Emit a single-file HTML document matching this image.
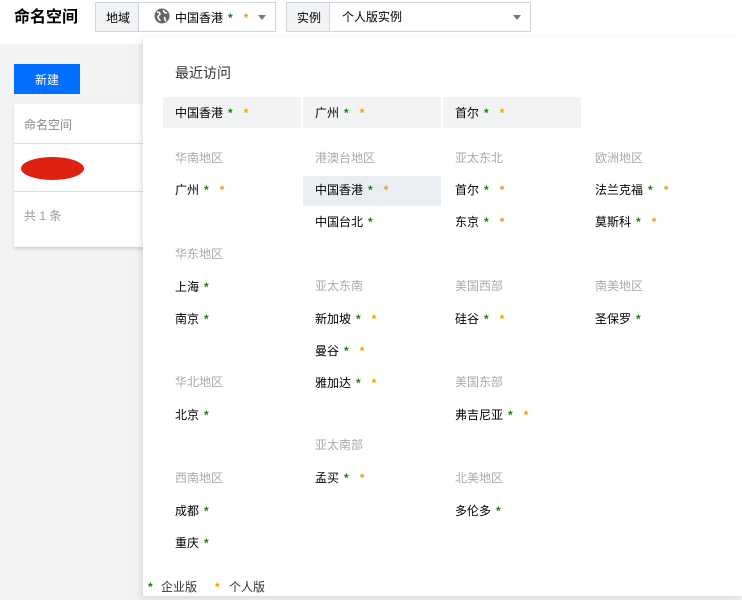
<!DOCTYPE html>
<html><head><meta charset="utf-8"><style>
*{margin:0;padding:0;box-sizing:border-box}
body{width:742px;height:600px;overflow:hidden;background:#f2f3f5;font-family:"Liberation Sans","Noto Sans CJK SC",sans-serif;font-size:12px;color:#000;position:relative}
.a{position:absolute;white-space:nowrap;line-height:16px;margin-top:1px}
.h{color:#aaa}
.g{color:#0a8a0a;font-weight:bold;margin-left:5px}
.o{color:#f5a000;font-weight:bold;margin-left:11px}
.bg{position:absolute;background:#f2f3f5}
</style></head><body>
<div style="position:absolute;left:0;top:0;width:742px;height:44px;background:#fff"></div>
<div class="a" style="left:14px;top:7px;font-size:16px;font-weight:bold;line-height:20px">命名空间</div>
<div style="position:absolute;left:95px;top:2px;width:181px;height:30px;border:1px solid #d0d4dc;background:#fff"></div>
<div style="position:absolute;left:96px;top:3px;width:43px;height:28px;background:#f2f3f5;border-right:1px solid #d0d4dc"></div>
<div class="a" style="left:106px;top:9px">地域</div>
<svg style="position:absolute;left:154px;top:8px" width="16" height="16" viewBox="0 0 16 16"><circle cx="8" cy="8" r="7.5" fill="#666"/><path d="M3 4c2 0 3 1 3 2s-2 1-2 3 2 2 2 4M10 2c-1 2 1 3 3 3M11 9c-1 1 0 3 1 4" stroke="#fff" stroke-width="1.6" fill="none"/></svg>
<div class="a" style="left:175px;top:9px">中国香港<span class="g">*</span><span class="o">*</span></div>
<div style="position:absolute;left:258px;top:15px;border:4px solid transparent;border-top:5px solid #777"></div>
<div style="position:absolute;left:286px;top:2px;width:245px;height:30px;border:1px solid #d0d4dc;background:#fff"></div>
<div style="position:absolute;left:287px;top:3px;width:43px;height:28px;background:#f2f3f5;border-right:1px solid #d0d4dc"></div>
<div class="a" style="left:297px;top:9px">实例</div>
<div class="a" style="left:342px;top:8px">个人版实例</div>
<div style="position:absolute;left:513px;top:15px;border:4px solid transparent;border-top:5px solid #777"></div>

<div style="position:absolute;left:14px;top:64px;width:66px;height:30px;background:#006eff"></div>
<div class="a" style="left:35px;top:71px;color:#fff">新建</div>
<div style="position:absolute;left:14px;top:104px;width:140px;height:143px;background:#fff;box-shadow:0 2px 3px rgba(0,0,0,.15)"></div>
<div class="a h" style="left:24px;top:116px;color:#888">命名空间</div>
<div style="position:absolute;left:14px;top:143px;width:140px;border-top:1px solid #dcdde4"></div>
<div style="position:absolute;left:21px;top:157px;width:63px;height:23px;background:#dd2211;border-radius:50%/50%"></div>
<div style="position:absolute;left:14px;top:191px;width:140px;border-top:1px solid #dcdde4"></div>
<div class="a" style="left:24px;top:207px;color:#999">共 1 条</div>

<div style="position:absolute;left:143px;top:37px;width:599px;height:559px;background:#fff;box-shadow:-2px 2px 6px rgba(0,0,0,.12)"></div>
<div class="a" style="left:175px;top:63px;font-size:14px;line-height:18px;color:#333">最近访问</div>
<div class="bg" style="left:163px;top:97px;width:138px;height:31px"></div>
<div class="bg" style="left:303px;top:97px;width:138px;height:31px"></div>
<div class="bg" style="left:443px;top:97px;width:138px;height:31px"></div>
<div class="bg" style="left:303px;top:176px;width:138px;height:30px;background:#eaedf1"></div>
<div class="a" style="left:175px;top:104px">中国香港<span class="g">*</span><span class="o">*</span></div>
<div class="a" style="left:315px;top:104px">广州<span class="g">*</span><span class="o">*</span></div>
<div class="a" style="left:455px;top:104px">首尔<span class="g">*</span><span class="o">*</span></div>

<div class="a h" style="left:175px;top:149px">华南地区</div>
<div class="a" style="left:175px;top:181px">广州<span class="g">*</span><span class="o">*</span></div>
<div class="a h" style="left:175px;top:245px">华东地区</div>
<div class="a" style="left:175px;top:278px">上海<span class="g">*</span></div>
<div class="a" style="left:175px;top:310px">南京<span class="g">*</span></div>
<div class="a h" style="left:175px;top:373px">华北地区</div>
<div class="a" style="left:175px;top:406px">北京<span class="g">*</span></div>
<div class="a h" style="left:175px;top:469px">西南地区</div>
<div class="a" style="left:175px;top:502px">成都<span class="g">*</span></div>
<div class="a" style="left:175px;top:534px">重庆<span class="g">*</span></div>

<div class="a h" style="left:315px;top:149px">港澳台地区</div>
<div class="a" style="left:315px;top:181px">中国香港<span class="g">*</span><span class="o">*</span></div>
<div class="a" style="left:315px;top:213px">中国台北<span class="g">*</span></div>
<div class="a h" style="left:315px;top:277px">亚太东南</div>
<div class="a" style="left:315px;top:310px">新加坡<span class="g">*</span><span class="o">*</span></div>
<div class="a" style="left:315px;top:342px">曼谷<span class="g">*</span><span class="o">*</span></div>
<div class="a" style="left:315px;top:374px">雅加达<span class="g">*</span><span class="o">*</span></div>
<div class="a h" style="left:315px;top:436px">亚太南部</div>
<div class="a" style="left:315px;top:469px">孟买<span class="g">*</span><span class="o">*</span></div>

<div class="a h" style="left:455px;top:149px">亚太东北</div>
<div class="a" style="left:455px;top:181px">首尔<span class="g">*</span><span class="o">*</span></div>
<div class="a" style="left:455px;top:213px">东京<span class="g">*</span><span class="o">*</span></div>
<div class="a h" style="left:455px;top:277px">美国西部</div>
<div class="a" style="left:455px;top:310px">硅谷<span class="g">*</span><span class="o">*</span></div>
<div class="a h" style="left:455px;top:373px">美国东部</div>
<div class="a" style="left:455px;top:406px">弗吉尼亚<span class="g">*</span><span class="o">*</span></div>
<div class="a h" style="left:455px;top:469px">北美地区</div>
<div class="a" style="left:455px;top:502px">多伦多<span class="g">*</span></div>

<div class="a h" style="left:595px;top:149px">欧洲地区</div>
<div class="a" style="left:595px;top:181px">法兰克福<span class="g">*</span><span class="o">*</span></div>
<div class="a" style="left:595px;top:213px">莫斯科<span class="g">*</span><span class="o">*</span></div>
<div class="a h" style="left:595px;top:277px">南美地区</div>
<div class="a" style="left:595px;top:310px">圣保罗<span class="g">*</span></div>

<div class="a" style="left:148px;top:578px;color:#333"><span class="g" style="margin:0">*</span></div>
<div class="a" style="left:161px;top:578px;color:#333">企业版</div>
<div class="a" style="left:215px;top:578px"><span class="o" style="margin:0">*</span></div>
<div class="a" style="left:229px;top:578px;color:#333">个人版</div>
</body></html>
